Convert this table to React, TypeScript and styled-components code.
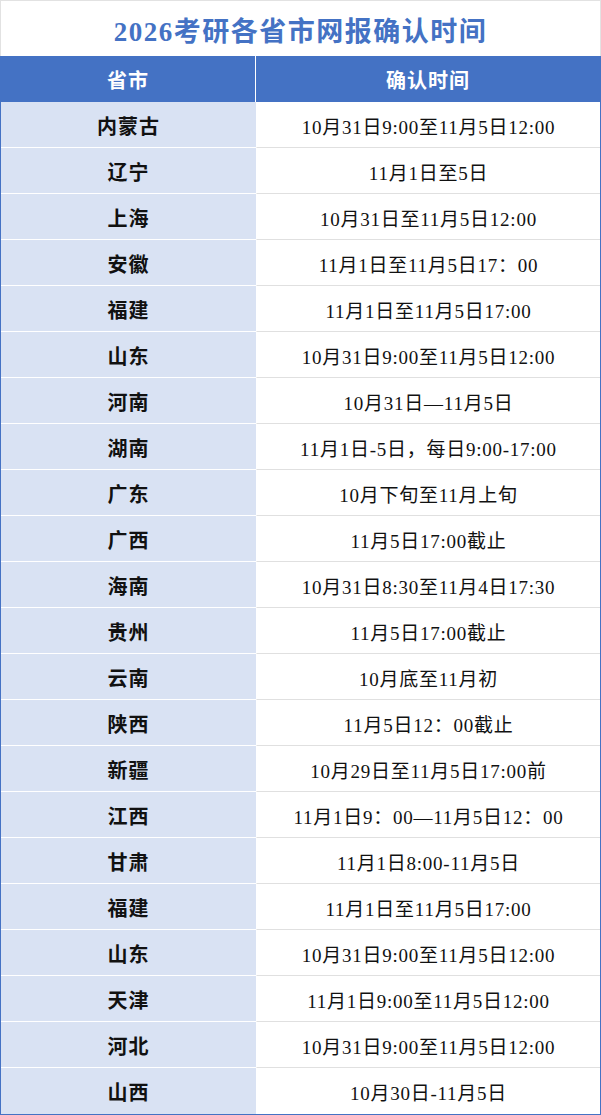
import styled, { createGlobalStyle } from "styled-components";

const blue = "#4472c4";
const paleBlue = "#d9e2f3";

const rows: [string, string][] = [
  ["内蒙古", "10月31日9:00至11月5日12:00"],
  ["辽宁", "11月1日至5日"],
  ["上海", "10月31日至11月5日12:00"],
  ["安徽", "11月1日至11月5日17：00"],
  ["福建", "11月1日至11月5日17:00"],
  ["山东", "10月31日9:00至11月5日12:00"],
  ["河南", "10月31日—11月5日"],
  ["湖南", "11月1日-5日，每日9:00-17:00"],
  ["广东", "10月下旬至11月上旬"],
  ["广西", "11月5日17:00截止"],
  ["海南", "10月31日8:30至11月4日17:30"],
  ["贵州", "11月5日17:00截止"],
  ["云南", "10月底至11月初"],
  ["陕西", "11月5日12：00截止"],
  ["新疆", "10月29日至11月5日17:00前"],
  ["江西", "11月1日9：00—11月5日12：00"],
  ["甘肃", "11月1日8:00-11月5日"],
  ["福建", "11月1日至11月5日17:00"],
  ["山东", "10月31日9:00至11月5日12:00"],
  ["天津", "11月1日9:00至11月5日12:00"],
  ["河北", "10月31日9:00至11月5日12:00"],
  ["山西", "10月30日-11月5日"],
];

const GlobalStyle = createGlobalStyle`
  body {
    margin: 0;
    background: #ffffff;
    font-family: "Liberation Serif", "Noto Sans CJK SC", serif;
  }
`;

const Sheet = styled.div`
  width: 601px;
  box-sizing: border-box;
`;

const Title = styled.h1`
  margin: 0;
  height: 56px;
  box-sizing: border-box;
  border: 1px solid #e2e2e2;
  border-bottom: none;
  display: flex;
  align-items: center;
  justify-content: center;
  padding-top: 2px;
  color: ${blue};
  font-size: 27px;
  font-weight: 700;
  letter-spacing: 1.5px;
`;

const Table = styled.div`
  display: grid;
  grid-template-columns: 255px 1fr;
  border-left: 1px solid ${blue};
  border-right: 1px solid ${blue};
  border-bottom: 1px solid ${blue};
`;

const HeadCell = styled.div<{ $first?: boolean }>`
  height: 46px;
  display: flex;
  align-items: center;
  justify-content: center;
  background: ${blue};
  color: #ffffff;
  font-size: 20px;
  font-weight: 700;
  letter-spacing: 1px;
  border-right: ${(p) => (p.$first ? "1px solid #ffffff" : "none")};
`;

const Cell = styled.div<{ $province?: boolean; $last?: boolean }>`
  height: 46px;
  box-sizing: border-box;
  display: flex;
  align-items: center;
  justify-content: center;
  padding-top: 1px;
  background: ${(p) => (p.$province ? paleBlue : "#ffffff")};
  color: #111111;
  font-size: ${(p) => (p.$province ? "20px" : "19px")};
  font-weight: ${(p) => (p.$province ? 700 : 400)};
  letter-spacing: ${(p) => (p.$province ? "1px" : "0.75px")};
  border-bottom: ${(p) =>
    p.$last ? "none" : p.$province ? "1px solid #ffffff" : "1px solid #e0e0e0"};
  border-left: ${(p) => (p.$province ? "none" : "1px solid #ffffff")};
  white-space: nowrap;
`;

export default function App() {
  return (
    <>
      <GlobalStyle />
      <Sheet>
        <Title>2026考研各省市网报确认时间</Title>
        <Table>
          <HeadCell $first>省市</HeadCell>
          <HeadCell>确认时间</HeadCell>
          {rows.map(([province, time], i) => {
            const last = i === rows.length - 1;
            return [
              <Cell key={`p${i}`} $province $last={last}>
                {province}
              </Cell>,
              <Cell key={`t${i}`} $last={last}>
                {time}
              </Cell>,
            ];
          })}
        </Table>
      </Sheet>
    </>
  );
}
